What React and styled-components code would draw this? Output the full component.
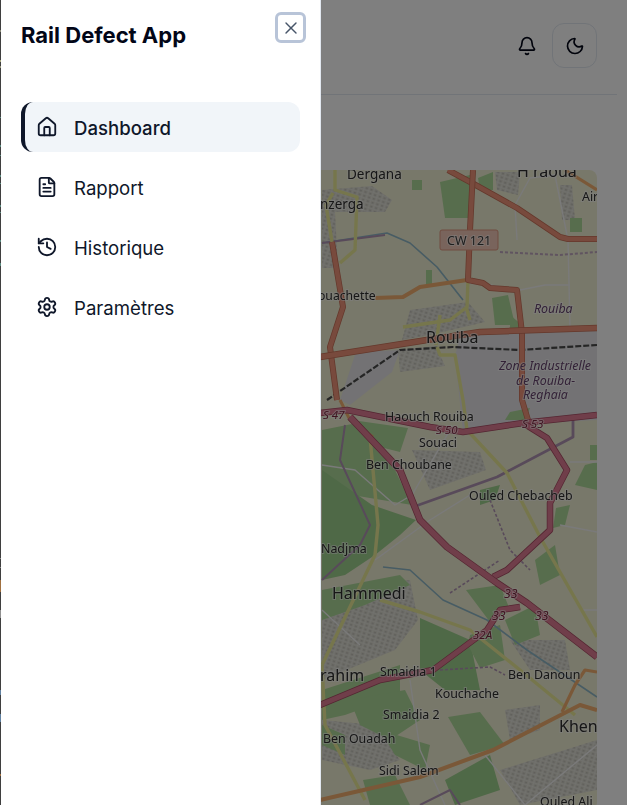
import React from 'react'
import styled, { createGlobalStyle } from 'styled-components'
import { House, FileText, History, Settings, X, Bell, Moon } from 'lucide-react'

const GlobalStyle = createGlobalStyle`
 html, body {
  margin: 0;
  padding: 0;
  height: 100%;
  overflow: hidden;
  background: #fff;
  font-family: Inter, "Noto Sans", sans-serif;
 }
`

const navItems = [
 { label: 'Dashboard', Icon: House, active: true },
 { label: 'Rapport', Icon: FileText },
 { label: 'Historique', Icon: History },
 { label: 'Paramètres', Icon: Settings },
]

// coordinates below are page pixels, the map viewBox starts at 30,170
const areas = [
 // industrial zone
 { fill: '#e6e5e8', d: 'M460 336L597 329V420L523 424L463 432L455 356Z' },
 { fill: '#e6e5e8', d: 'M356 352L400 350L392 372L350 405L340 400Z' },
 // residential
 { fill: 'url(#town)', d: 'M322 190L372 186L392 200L385 212L322 212Z' },
 { fill: 'url(#town)', d: 'M322 212L335 212L338 268L322 268Z' },
 { fill: 'url(#town)', d: 'M410 310L468 302L485 322L430 335L402 340Z' },
 { fill: 'url(#town)', d: 'M398 350L436 346L445 366L400 372Z' },
 { fill: 'url(#town)', d: 'M495 172L520 172L518 195L497 190Z' },
 { fill: 'url(#town)', d: 'M560 185L572 185L575 220L562 220Z' },
 { fill: 'url(#town)', d: 'M412 450L480 452L486 470L430 490Z' },
 { fill: 'url(#town)', d: 'M350 472L395 480L402 500L370 495Z' },
 { fill: 'url(#town)', d: 'M322 590L410 580L418 620L395 650L322 680Z' },
 { fill: 'url(#town)', d: 'M510 640L565 640L570 670L530 670Z' },
 { fill: 'url(#town)', d: 'M322 720L375 725L400 760L370 770L322 760Z' },
 { fill: 'url(#town)', d: 'M500 770L597 740V790L520 805Z' },
 { fill: 'url(#town)', d: 'M505 710L540 705L540 730L510 740Z' },
 // green fields
 { fill: '#aedb9a', d: 'M322 430L352 424L395 470L412 505L322 490Z' },
 { fill: '#9fd28f', d: 'M322 470L372 505L416 520L400 535L375 555L345 575L322 580Z' },
 { fill: '#aedb9a', d: 'M352 420L408 428L400 452L372 445Z' },
 { fill: '#aedb9a', d: 'M322 590L400 575L410 585L365 605L322 620Z' },
 { fill: '#9fd28f', d: 'M420 618L470 640L480 690L445 690L420 670Z' },
 { fill: '#aedb9a', d: 'M470 635L500 625L505 660L480 668L468 645Z' },
 { fill: '#aedb9a', d: 'M466 590L500 585L510 610L490 622Z' },
 { fill: '#aedb9a', d: 'M505 620L535 605L540 635L515 645Z' },
 { fill: '#aedb9a', d: 'M535 560L555 545L560 575L540 585Z' },
 { fill: '#aedb9a', d: 'M322 690L400 665L400 695L345 715L322 720Z' },
 { fill: '#aedb9a', d: 'M350 700L405 690L420 720L390 740L360 725Z' },
 { fill: '#aedb9a', d: 'M322 725L345 735L345 755L322 745Z' },
 { fill: '#aedb9a', d: 'M448 717L480 712L505 745L470 755Z' },
 { fill: '#aedb9a', d: 'M380 730L430 745L425 770L395 755Z' },
 { fill: '#9fd28f', d: 'M445 780L490 755L500 790L455 805Z' },
 { fill: '#aedb9a', d: 'M363 780L395 775L410 805L370 805Z' },
 { fill: '#aedb9a', d: 'M440 182L470 175L469 218L445 218Z' },
 { fill: '#aedb9a', d: 'M478 178L493 172L493 190L480 190Z' },
 { fill: '#aedb9a', d: 'M412 180L422 180L422 190L412 190Z' },
 { fill: '#aedb9a', d: 'M492 298L508 295L515 325L495 325Z' },
 { fill: '#aedb9a', d: 'M510 315L522 325L520 330L510 328Z' },
 { fill: '#aedb9a', d: 'M426 270L432 270L432 285L426 285Z' },
 { fill: '#aedb9a', d: 'M570 218L582 218L582 232L570 232Z' },
 { fill: '#aedb9a', d: 'M590 445L597 445V460L590 460Z' },
 { fill: '#aedb9a', d: 'M585 465L597 462V490L575 485Z' },
 { fill: '#aedb9a', d: 'M556 508L570 505L565 525L553 528Z' },
 { fill: '#aedb9a', d: 'M510 412L530 408L525 420L505 420Z' },
 { fill: '#9fd28f', d: 'M480 490L500 485L495 500L480 505Z' },
]

const roads = [
 // river
 { c: '#8fb8c8', w: 1.6, d: 'M322 243L387 233L410 243L437 267L463 300' },
 { c: '#8fb8c8', w: 1.6, d: 'M383 567L410 570L443 600L487 620L527 650L597 697' },
 // minor
 { c: '#f4f4f4', w: 1.4, d: 'M517 240L515 205L530 178L555 175L568 240L570 328' },
 { c: '#f4f4f4', w: 1.4, d: 'M468 283L490 285L520 290L545 285L570 285' },
 { c: '#f4f4f4', w: 1.4, d: 'M322 465L355 470L395 505L412 495L450 430' },
 { c: '#f4f4f4', w: 1.4, d: 'M375 560L430 520L470 495' },
 { c: '#f4f4f4', w: 1.4, d: 'M410 680L420 750L445 805' },
 { c: '#f4f4f4', w: 1.4, d: 'M485 755L525 805L597 745' },
 { c: '#f4f4f4', w: 1.4, d: 'M570 462L597 462M560 525L597 532M580 610L597 610' },
 { c: '#f4f4f4', w: 1.4, d: 'M322 610L360 645' },
 // purple lines
 { c: '#b094b4', w: 1.8, d: 'M322 243L385 235' },
 { c: '#b094b4', w: 2.8, d: 'M413 507L497 477L573 437L573 420' },
 { c: '#b094b4', w: 2, d: 'M345 425L340 460L370 525L360 545L322 580' },
 { c: '#b094b4', w: 1.6, dash: '3 2', d: 'M490 500L510 550L530 570M450 593L500 560' },
 { c: '#b094b4', w: 1.6, dash: '3 2', d: 'M440 670L490 667L505 675' },
 { c: '#c0a8c0', w: 2, dash: '3 2', d: 'M500 252L560 255L597 252' },
 { c: '#b094b4', w: 2, d: 'M420 805L450 790L460 805' },
 // rail
 { c: '#4a4a4a', w: 2.2, dash: '6 2', d: 'M327 400L400 350L453 347L520 350L597 345' },
 // yellow roads
 { c: '#eded98', w: 3.4, d: 'M335 170L335 190L357 197L355 250L340 263' },
 { c: '#eded98', w: 3.4, d: 'M333 193L326 205L332 242' },
 { c: '#eded98', w: 3.4, d: 'M468 280L467 307L450 320L403 327' },
 { c: '#eded98', w: 3.4, d: 'M437 347L440 355L455 355L463 400L467 430L507 473L540 537L597 637' },
 { c: '#eded98', w: 3.4, d: 'M370 437L378 525L375 555L322 665' },
 { c: '#eded98', w: 3.4, d: 'M380 600L420 612L470 630L520 670L575 715' },
 { c: '#eded98', w: 3.4, d: 'M322 665L325 725L365 800' },
 { c: '#eded98', w: 3.4, d: 'M440 315L436 345M470 320L466 307' },
 // orange
 { c: '#f4b070', w: 4, d: 'M375 298L403 297L420 287L467 280' },
 { c: '#f4b070', w: 4, d: 'M320 800L420 777L493 750L580 705L597 710' },
 { c: '#f4b070', w: 3.2, d: 'M562 712L575 685L585 670L597 672' },
 { c: '#f4b070', w: 3.2, d: 'M565 170L597 190' },
 { c: '#f4b070', w: 3, d: 'M340 400L350 420L373 437' },
 // trunk
 { c: '#f0957a', e: '#c87058', w: 5, d: 'M448 170L472 183L517 208L560 237L568 239L597 239' },
 { c: '#f0957a', e: '#c87058', w: 5, d: 'M473 170L470 230L468 280L483 283L490 288L517 290L522 333L522 400L528 420' },
 { c: '#f0957a', e: '#c87058', w: 5, d: 'M332 242L343 307L330 347L337 400' },
 { c: '#f0957a', e: '#c87058', w: 5.5, d: 'M320 357L427 340L480 332L597 328' },
 // motorway
 { c: '#e07d94', e: '#a84c64', w: 5.5, d: 'M320 413L347 410L430 427L463 432L523 423L597 415' },
 { c: '#e07d94', e: '#a84c64', w: 5.5, d: 'M523 423L547 438L567 470L550 503L550 530L507 570L493 577' },
 { c: '#e07d94', e: '#a84c64', w: 6, d: 'M350 417L400 470L420 520L447 547L497 583L527 603L597 657' },
 { c: '#e07d94', e: '#a84c64', w: 5.5, d: 'M520 607L500 610L487 630L433 670L380 680L320 705' },
]

const labels = [
 { t: 'Dergana', x: 347, y: 179, s: 13.5 },
 { t: 'H raoua', x: 517, y: 177, s: 16 },
 { t: 'Air', x: 582, y: 201, s: 12.4 },
 { t: 'nzerga', x: 320, y: 209, s: 13.5 },
 { t: 'ouachette', x: 318, y: 300, s: 12.2 },
 { t: 'Rouiba', x: 426, y: 343, s: 16 },
 { t: 'Rouiba', x: 534, y: 313, s: 12.4, i: true, c: '#66446e' },
 { t: 'Zone Industrielle', x: 499, y: 370, s: 12.4, i: true, c: '#66446e' },
 { t: 'de Rouiba-', x: 516, y: 385, s: 12.4, i: true, c: '#66446e' },
 { t: 'Reghaia', x: 523, y: 399, s: 12.4, i: true, c: '#66446e' },
 { t: 'S 47', x: 323, y: 419, s: 11.5, i: true, c: '#7c2840' },
 { t: 'S 50', x: 436, y: 434, s: 11.5, i: true, c: '#7c2840' },
 { t: 'S 53', x: 522, y: 428, s: 11.5, i: true, c: '#7c2840' },
 { t: 'Haouch Rouiba', x: 385, y: 421, s: 12.4 },
 { t: 'Souaci', x: 419, y: 447, s: 12.4 },
 { t: 'Ben Choubane', x: 366, y: 469, s: 12.4 },
 { t: 'Ouled Chebacheb', x: 469, y: 500, s: 12.4 },
 { t: 'Nadjma', x: 321, y: 553, s: 12.4 },
 { t: 'Hammedi', x: 332, y: 599, s: 16 },
 { t: '33', x: 504, y: 598, s: 12.4, i: true, c: '#7c2840' },
 { t: '33', x: 492, y: 620, s: 12.4, i: true, c: '#7c2840' },
 { t: '33', x: 535, y: 620, s: 12.4, i: true, c: '#7c2840' },
 { t: '32A', x: 473, y: 639, s: 11.5, i: true, c: '#7c2840' },
 { t: 'rahim', x: 320, y: 681, s: 16 },
 { t: 'Smaidia 1', x: 380, y: 676, s: 12.4 },
 { t: 'Ben Danoun', x: 508, y: 679, s: 12.4 },
 { t: 'Kouchache', x: 435, y: 698, s: 12.4 },
 { t: 'Smaidia 2', x: 383, y: 719, s: 12.4 },
 { t: 'Khen', x: 559, y: 732, s: 16 },
 { t: 'Ben Ouadah', x: 323, y: 743, s: 12.4 },
 { t: 'Sidi Salem', x: 379, y: 775, s: 12.4 },
 { t: 'Ouled Ali', x: 540, y: 806, s: 12.4 },
]

// colour specks on the 1px strip left of the drawer, [top, bottom, colour]
const edgeMarks = [
 [30, 32, '#8a8a78'], [60, 62, '#a8a880'], [66, 68, '#9a9a80'], [117, 118, '#5a8a80'],
 [145, 147, '#5a8a80'], [155, 156, '#5a8a80'], [175, 177, '#5a8a80'], [183, 184, '#5a8a80'],
 [205, 207, '#5a8a80'], [212, 213, '#5a8a80'], [240, 242, '#5a8a80'], [263, 266, '#5a8a80'],
 [558, 559, '#888'], [567, 568, '#888'], [580, 592, '#a07040'], [610, 618, '#909090'],
 [690, 695, '#6080a0'], [714, 722, '#6080a0'], [774, 776, '#a07040'],
]

const edgeBackground = `linear-gradient(to bottom, ${edgeMarks
 .reduce(
  (stops, [a, b, c]) => [
   ...stops.slice(0, -1),
   `#3f3f3f ${a}px`,
   `${c} ${a}px`,
   `${c} ${b}px`,
   `#3f3f3f ${b}px`,
   '#3f3f3f 100%',
  ],
  ['#3f3f3f 0']
 )
 .join(', ')})`

function MapView() {
 return (
  <MapSvg viewBox="30 170 567 635" width="567" height="635">
   <defs>
    <pattern id="town" width="5" height="4" patternUnits="userSpaceOnUse" patternTransform="rotate(18)">
     <rect width="5" height="4" fill="#dad9ce" />
     <rect x="1" y="1" width="2" height="1.5" fill="#c2c1ba" />
     <path d="M0 3.5H5M4.5 0V4" stroke="#e6e6e0" strokeWidth="0.6" />
    </pattern>
   </defs>
   <rect x="30" y="170" width="567" height="635" fill="#f1f0d4" />
   {areas.map((a, i) => (
    <path key={i} d={a.d} fill={a.fill} />
   ))}
   {roads.map((r, i) => (
    <g key={i}>
     {r.e && <RoadLine d={r.d} stroke={r.e} strokeWidth={r.w + 1} />}
     <RoadLine d={r.d} stroke={r.c} strokeWidth={r.e ? r.w - 0.5 : r.w} strokeDasharray={r.dash} />
    </g>
   ))}
   <rect x="440" y="230" width="58" height="20" rx="2" fill="#f2c8b8" stroke="#e09880" />
   <MapLabel x="447" y="245" fontSize="12.5" fill="#3c3c3c">CW 121</MapLabel>
   {labels.map((l) => (
    <MapLabel
     key={l.t + l.x}
     x={l.x}
     y={l.y}
     fontSize={l.s}
     fontStyle={l.i ? 'italic' : 'normal'}
     fill={l.c || '#2e2e2e'}
    >
     {l.t}
    </MapLabel>
   ))}
  </MapSvg>
 )
}

export default function App() {
 return (
  <>
   <GlobalStyle />
   <Page>
    <Header>
     <BellButton>
      <Bell size={20} strokeWidth={2} />
     </BellButton>
     <ThemeButton>
      <Moon size={20} strokeWidth={2} />
     </ThemeButton>
    </Header>
    <Main>
     <MapCard>
      <MapView />
     </MapCard>
    </Main>
   </Page>
   <Overlay />
   <EdgeStrip style={{ background: edgeBackground }} />
   <Drawer>
    <DrawerTitle>Rail Defect App</DrawerTitle>
    <CloseButton aria-label="Close">
     <X size={20} strokeWidth={1.7} />
    </CloseButton>
    <Nav>
     {navItems.map(({ label, Icon, active }) => (
      <NavItem key={label} $active={active}>
       <Icon size={22} strokeWidth={2} />
       <span>{label}</span>
      </NavItem>
     ))}
    </Nav>
   </Drawer>
  </>
 )
}

const Page = styled.div`
 height: 100vh;
 overflow: hidden;
 background: #fff;
 display: flex;
 flex-direction: column;
`

const Header = styled.header`
 flex: none;
 height: 94px;
 margin: 0 10px 0 0;
 padding-right: 20px;
 border-bottom: 1px solid #e2e8f0;
 display: flex;
 align-items: center;
 justify-content: flex-end;
 gap: 15px;
 box-sizing: content-box;
 color: #000;
`

const BellButton = styled.div`
 display: flex;
 margin-top: -3px;
 color: #020617;
`

const ThemeButton = styled.div`
 width: 45px;
 height: 45px;
 margin-top: -3px;
 box-sizing: border-box;
 border: 1px solid #e2e8f0;
 border-radius: 12px;
 display: flex;
 align-items: center;
 justify-content: center;
 color: #020617;
`

const Main = styled.main`
 flex: 1;
 padding: 75px 30px 0;
 overflow: hidden;
`

const MapCard = styled.div`
 height: 640px;
 border-radius: 8px;
 overflow: hidden;
`

const MapSvg = styled.svg`
 display: block;
 filter: blur(0.55px);
`

const RoadLine = styled.path`
 fill: none;
 stroke-linejoin: round;
`

const MapLabel = styled.text`
 font-family: "Noto Sans", sans-serif;
 paint-order: stroke;
 stroke: rgba(255, 255, 255, 0.55);
 stroke-width: 2px;
`

const Overlay = styled.div`
 position: fixed;
 inset: 0;
 background: rgba(0, 0, 0, 0.5);
`

const EdgeStrip = styled.div`
 position: fixed;
 left: 0;
 top: 0;
 bottom: 0;
 width: 1px;
`

const Drawer = styled.aside`
 position: fixed;
 left: 1px;
 top: 0;
 bottom: 0;
 width: 320px;
 box-sizing: border-box;
 padding: 20px 20px 0;
 background: #fff;
 border-right: 1px solid #e2e8f0;
`

const DrawerTitle = styled.h2`
 margin: 0;
 font-size: 22px;
 line-height: 30px;
 font-weight: 700;
 color: #020617;
`

const CloseButton = styled.button`
 position: absolute;
 left: 274px;
 top: 12px;
 width: 31px;
 height: 31px;
 padding: 0;
 box-sizing: border-box;
 background: #fff;
 border: 3px solid #b8c4d8;
 border-radius: 6px;
 display: flex;
 align-items: center;
 justify-content: center;
 color: #475569;
`

const Nav = styled.nav`
 margin-top: 52px;
 display: flex;
 flex-direction: column;
 gap: 10px;
`

const NavItem = styled.div`
 height: 50px;
 width: 279px;
 box-sizing: border-box;
 display: flex;
 align-items: center;
 gap: 16px;
 padding-left: ${(p) => (p.$active ? '11px' : '15px')};
 border-left: ${(p) => (p.$active ? '4px solid #0f172a' : 'none')};
 border-radius: 12px;
 background: ${(p) => (p.$active ? '#f1f5f9' : 'transparent')};
 color: #0f172a;
 font-size: 18.6px;
 font-weight: ${(p) => (p.$active ? 500 : 400)};
 svg {
  flex: none;
 }
 span {
  padding-top: 2px;
 }
`
